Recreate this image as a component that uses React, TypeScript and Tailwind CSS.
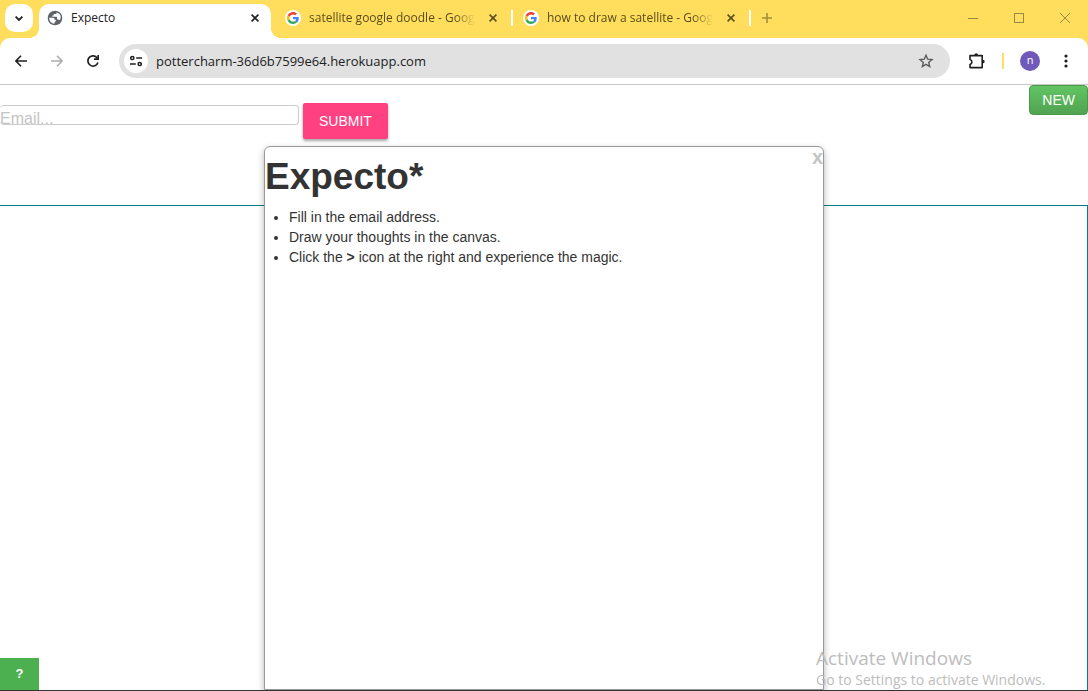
import React from "react";

function GoogleMark() {
  return (
    <span className="flex size-4 shrink-0 items-center justify-center rounded-full bg-white">
      <svg viewBox="0 0 48 48" className="size-3" aria-hidden="true">
        <path fill="#EA4335" d="M24 9.5c3.54 0 6.71 1.22 9.21 3.6l6.85-6.85C35.9 2.38 30.47 0 24 0 14.62 0 6.51 5.38 2.56 13.22l7.98 6.19C12.43 13.72 17.74 9.5 24 9.5z" />
        <path fill="#4285F4" d="M46.98 24.55c0-1.57-.15-3.09-.38-4.55H24v9.02h12.94c-.58 2.96-2.26 5.48-4.78 7.18l7.73 6c4.51-4.18 7.09-10.36 7.09-17.65z" />
        <path fill="#FBBC05" d="M10.53 28.59c-.48-1.45-.76-2.99-.76-4.59s.27-3.14.76-4.59l-7.98-6.19C.92 16.46 0 20.12 0 24c0 3.88.92 7.54 2.56 10.78l7.97-6.19z" />
        <path fill="#34A853" d="M24 48c6.48 0 11.93-2.13 15.89-5.81l-7.73-6c-2.15 1.45-4.92 2.3-8.16 2.3-6.26 0-11.57-4.22-13.47-9.91l-7.98 6.19C6.51 42.62 14.62 48 24 48z" />
      </svg>
    </span>
  );
}

function Cross() {
  return (
    <svg viewBox="0 0 8 8" className="size-2" fill="none" stroke="currentColor" strokeWidth="1.6" aria-hidden="true">
      <path d="M.6.6l6.8 6.8M7.4.6L.6 7.4" />
    </svg>
  );
}

function BackgroundTab({ title }: { title: string }) {
  return (
    <div className="flex h-9 w-[238px] min-w-0 items-center pl-[10px] text-[#5a4d1c]">
      <GoogleMark />
      <span className="ml-2 w-[166px] whitespace-nowrap text-xs [mask-image:linear-gradient(to_right,black_88%,transparent)]">
        {title}
      </span>
      <button type="button" aria-label={`Close ${title}`} className="ml-[10px] flex w-4 items-center justify-center">
        <Cross />
      </button>
      <span className="ml-auto h-4 w-[2px] bg-white" />
    </div>
  );
}

function TabStrip() {
  return (
    <div className="relative flex h-[38px] items-start bg-[#ffde5e] pl-[5px]">
      <button type="button" aria-label="Search tabs" className="mt-1 flex size-7 shrink-0 items-center justify-center rounded-[10px] bg-white">
        <svg viewBox="0 0 8 5" className="h-[5px] w-2" fill="none" stroke="#1f1f1f" strokeWidth="1.8" aria-hidden="true">
          <path d="M.6.6L4 4 7.4.6" />
        </svg>
      </button>
      <div className="relative ml-[6px] mr-1 mt-1 flex h-[34px] w-[232px] shrink-0 items-center rounded-t-[10px] bg-white pb-[6px] pl-2 text-[#202124]">
        <span className="absolute -left-[10px] bottom-0 size-[10px] bg-[radial-gradient(circle_at_0_0,transparent_10px,white_10px)]" />
        <span className="absolute -right-[10px] bottom-0 size-[10px] bg-[radial-gradient(circle_at_100%_0,transparent_10px,white_10px)]" />
        <svg viewBox="0 0 16 16" className="size-4 shrink-0" aria-hidden="true">
          <circle cx="8" cy="8" r="7.3" fill="#5f6368" />
          <path fill="#fff" d="M2.200 7.800h3.600c1.300 0 1.800.8 1.800 1.900h1.200v1.700c-.9 0-1.300.5-1.300 1.300v1.100C4.500 13.600 2.100 11 2.200 7.800z" />
          <path fill="#fff" d="M9.600 2.500c0 1.100-.5 1.600-1.500 1.600H6.700v1.400H5.300v1.300h3.800c.7 0 1 .4 1 1v1.600h1c.7 0 1.100.3 1.400.9 2.600-3 .9-6.900-2.900-7.800z" />
        </svg>
        <span className="ml-2 text-xs">Expecto</span>
        <button type="button" aria-label="Close Expecto" className="ml-auto mr-2 flex w-4 items-center justify-center">
          <Cross />
        </button>
      </div>
      <BackgroundTab title="satellite google doodle - Goog" />
      <BackgroundTab title="how to draw a satellite - Google" />
      <button type="button" aria-label="New tab" className="flex h-9 w-8 items-center justify-center text-[#a28d3d]">
        <svg viewBox="0 0 10 10" className="size-[10px]" fill="none" stroke="currentColor" strokeWidth="1.6" aria-hidden="true">
          <path d="M5 0v10M0 5h10" />
        </svg>
      </button>
      <div className="ml-auto flex h-9 text-[#9b8845]">
        <button type="button" aria-label="Minimize" className="flex w-[46px] items-center justify-center">
          <span className="h-px w-[10px] bg-current" />
        </button>
        <button type="button" aria-label="Maximize" className="flex w-[46px] items-center justify-center">
          <span className="size-[10px] border border-current" />
        </button>
        <button type="button" aria-label="Close window" className="flex w-[46px] items-center justify-center">
          <svg viewBox="0 0 10 10" className="size-[10px]" fill="none" stroke="currentColor" aria-hidden="true">
            <path d="M0 0l10 10M10 0L0 10" />
          </svg>
        </button>
      </div>
    </div>
  );
}

function Toolbar() {
  return (
    <div className="bg-[#ffde5e]">
      <div className="flex h-[47px] items-center rounded-t-[10px] border-b border-[#c9c9c9] bg-white pl-[3px] text-[#1f1f1f]">
        <button type="button" aria-label="Back" className="flex size-9 items-center justify-center">
          <svg viewBox="0 0 12 12" className="size-3" fill="none" stroke="currentColor" strokeWidth="1.6" aria-hidden="true">
            <path d="M12 6H1M6 .8L.9 6 6 11.200" />
          </svg>
        </button>
        <button type="button" aria-label="Forward" className="flex size-9 items-center justify-center text-[#adadad]">
          <svg viewBox="0 0 12 12" className="size-3" fill="none" stroke="currentColor" strokeWidth="1.6" aria-hidden="true">
            <path d="M0 6h11M6 .8L11.100 6 6 11.200" />
          </svg>
        </button>
        <button type="button" aria-label="Reload" className="flex size-9 items-center justify-center">
          <svg viewBox="0 0 12 12" className="size-3" fill="none" stroke="currentColor" strokeWidth="1.700" aria-hidden="true">
            <path d="M10.900 7.400A5.100 5.100 0 1 1 10.300 3.200" />
            <path d="M11.200 0v4.200H7" />
          </svg>
        </button>
        <div className="ml-2 flex h-[34px] flex-1 items-center rounded-full bg-[#e1e1e1] pl-[5px] pr-4">
          <button type="button" aria-label="View site information" className="flex size-6 items-center justify-center rounded-full bg-white">
            <svg viewBox="0 0 12 12" className="size-3" fill="none" stroke="currentColor" strokeWidth="1.500" aria-hidden="true">
              <circle cx="2.300" cy="3" r="1.600" />
              <path d="M6.200 3H12M0 9h5.800" />
              <circle cx="9.700" cy="9" r="1.600" />
            </svg>
          </button>
          <input
            aria-label="Address"
            defaultValue="pottercharm-36d6b7599e64.herokuapp.com"
            className="ml-2 min-w-0 flex-1 bg-transparent pt-[2px] text-[13px] text-[#202124] outline-none"
          />
          <button type="button" aria-label="Bookmark this tab" className="flex size-4 items-center justify-center text-[#5c5c5c]">
            <svg viewBox="0 0 16 16" className="size-4" fill="none" stroke="currentColor" strokeWidth="1.400" aria-hidden="true">
              <path d="M8 2.200l1.700 4 4.300.4-3.300 2.800 1 4.200L8 11.400l-3.700 2.200 1-4.200L2 6.600l4.300-.4z" />
            </svg>
          </button>
        </div>
        <button type="button" aria-label="Extensions" className="ml-[19px] flex size-4 items-center justify-center">
          <svg viewBox="0 0 16 16" className="size-4" aria-hidden="true">
            <path fill="none" stroke="currentColor" strokeWidth="1.600" strokeLinejoin="round" d="M1 2.600h12.200v12H1v-3.200a2.600 2.600 0 0 0 0-5z" />
            <path fill="currentColor" d="M5.400 2a1.800 1.800 0 0 1 3.600 0zM13.900 6.800a1.800 1.800 0 0 1 0 3.600z" />
          </svg>
        </button>
        <span className="ml-[17px] h-4 w-[2px] bg-[#ffde5e]" />
        <button type="button" aria-label="Profile" className="ml-4 flex size-5 items-center justify-center rounded-full bg-[#7059bb] pb-px text-[11px] text-white">
          n
        </button>
        <button type="button" aria-label="Menu" className="ml-[14px] mr-[10px] flex h-9 w-6 items-center justify-center">
          <svg viewBox="0 0 4 14" className="h-[14px] w-1" fill="currentColor" aria-hidden="true">
            <circle cx="2" cy="2" r="1.600" />
            <circle cx="2" cy="7" r="1.600" />
            <circle cx="2" cy="12" r="1.600" />
          </svg>
        </button>
      </div>
    </div>
  );
}

function HelpDialog() {
  return (
    <section
      role="dialog"
      aria-labelledby="help-title"
      className="absolute bottom-0 left-1/2 top-[61px] w-[560px] max-w-full -translate-x-1/2 rounded-t-md border border-[#999] bg-white shadow-[0_3px_7px_rgba(0,0,0,0.3)]"
    >
      <button type="button" aria-label="Close" className="absolute right-0 top-0 text-xl font-bold leading-5 text-[#c4c4c4]">
        x
      </button>
      <h1 id="help-title" className="mt-[10px] text-[37px] font-bold leading-10">
        Expecto*
      </h1>
      <ul className="ml-6 mt-[10px] list-disc text-sm leading-5">
        <li>Fill in the email address.</li>
        <li>Draw your thoughts in the canvas.</li>
        <li>
          Click the <b>&gt;</b> icon at the right and experience the magic.
        </li>
      </ul>
    </section>
  );
}

export default function App() {
  return (
    <div className="flex h-screen flex-col bg-white font-['Open_Sans',sans-serif]">
      <TabStrip />
      <Toolbar />
      <main className="relative flex min-h-0 flex-1 flex-col overflow-hidden border-b border-[#333] font-['Liberation_Sans',sans-serif] text-[#333]">
        <div className="flex h-[120px] shrink-0 items-start">
          <form className="flex items-start gap-1 pt-[18px]" onSubmit={(e) => e.preventDefault()}>
            <input
              type="email"
              aria-label="Email"
              placeholder="Email..."
              className="mt-[2px] h-5 w-[299px] rounded border border-l-0 border-[#ccc] pt-2 text-base text-[#555] outline-none placeholder:text-[#c4c4c4]"
            />
            <button type="submit" className="h-9 rounded-[2px] bg-[#ff4081] px-4 text-sm text-white shadow-[0_2px_3px_rgba(0,0,0,0.35)]">
              SUBMIT
            </button>
          </form>
          <button
            type="button"
            className="ml-auto h-[30px] rounded border border-[#4a9a4a] bg-linear-to-b from-[#62c462] to-[#51a351] px-3 text-sm text-white"
          >
            NEW
          </button>
        </div>
        <div className="flex-1 border-r border-t border-[#008080]" />
        <button type="button" aria-label="Help" className="absolute bottom-0 left-0 h-8 w-[39px] bg-[#4caf50] text-[13px] font-bold text-white">
          ?
        </button>
        <HelpDialog />
        <div className="pointer-events-none absolute bottom-0 right-9 w-[236px] whitespace-nowrap font-['Open_Sans',sans-serif] text-[#bdbdbd]">
          <p className="text-[19px] leading-6">Activate Windows</p>
          <p className="text-sm leading-5">Go to Settings to activate Windows.</p>
        </div>
      </main>
    </div>
  );
}
